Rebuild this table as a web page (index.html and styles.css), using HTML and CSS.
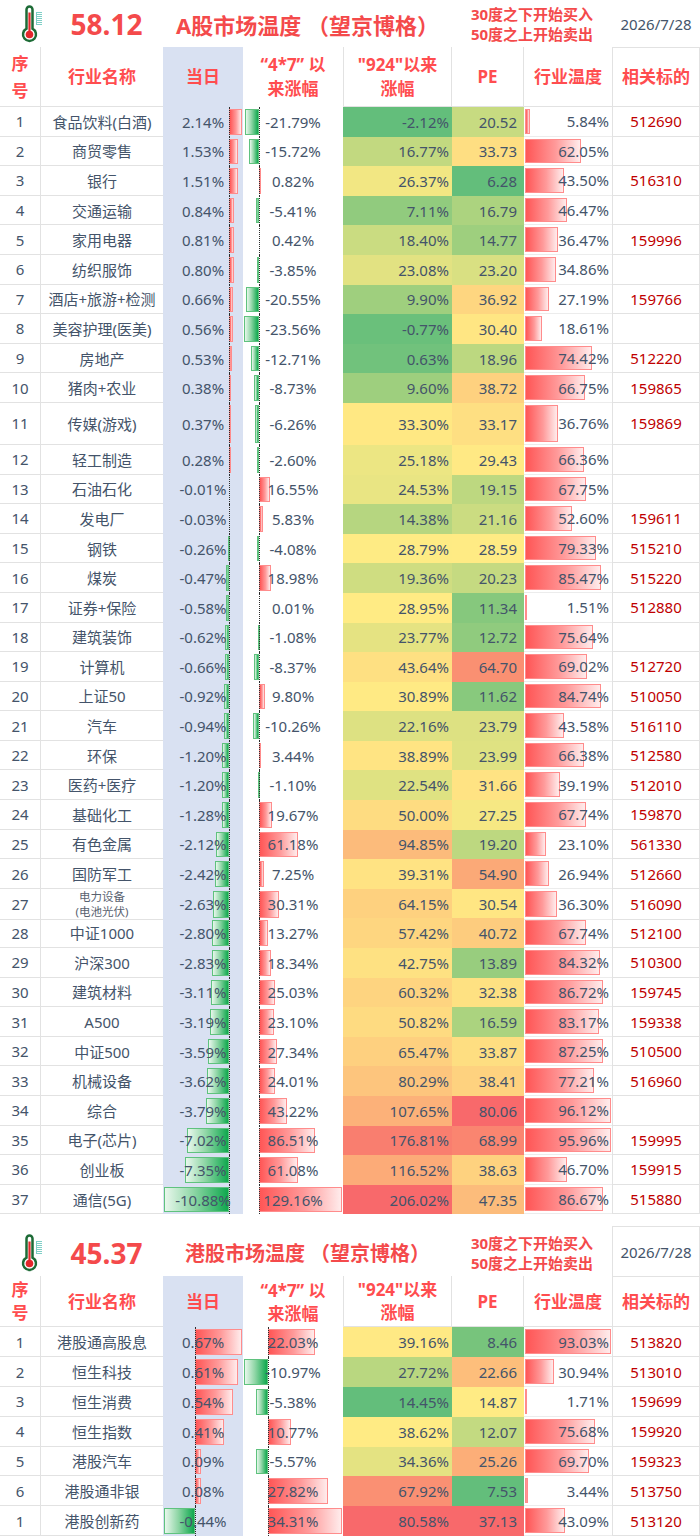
FILE: index.html
```html
<!DOCTYPE html>
<html lang="zh-CN">
<head>
<meta charset="utf-8">
<title>市场温度</title>
<link rel="stylesheet" href="styles.css">
</head>
<body>
<main class="sheet">

<section class="section a">
  <header class="title">
    <div class="t-icon">
      <svg width="22" height="38" viewBox="0 0 22 38" aria-hidden="true">
        <g stroke="#7fcfc6" stroke-width="1">
          <line x1="15.5" y1="7" x2="15.5" y2="20"/>
          <line x1="15" y1="7.5" x2="21" y2="7.5"/><line x1="15" y1="9.5" x2="21" y2="9.5"/><line x1="15" y1="11.5" x2="21" y2="11.5"/><line x1="15" y1="13.5" x2="21" y2="13.5"/><line x1="15" y1="15.5" x2="21" y2="15.5"/><line x1="15" y1="17.5" x2="21" y2="17.5"/><line x1="15" y1="19.5" x2="21" y2="19.5"/>
        </g>
        <path d="M5.5,23.7 V4.5 A3,3 0 0 1 11.5,4.5 V23.7 A6.5,6.5 0 1 1 5.5,23.7 Z" fill="#fff" stroke="#1d6b36" stroke-width="2.5"/>
        <line x1="8.5" y1="7.5" x2="8.5" y2="29" stroke="#e3262b" stroke-width="2.2"/>
        <circle cx="8.5" cy="29.5" r="3.8" fill="#e3262b"/>
      </svg>
    </div>
    <div class="t-num">58.12</div>
    <div class="t-name">A股市场温度 （望京博格）</div>
    <div class="t-note">30度之下开始买入<br>50度之上开始卖出</div>
    <div class="t-date">2026/7/28</div>
  </header>

  <div class="row head">
    <div class="c idx"><span class="v">序<br>号</span></div>
    <div class="c name"><span class="v">行业名称</span></div>
    <div class="c day"><span class="v">当日</span></div>
    <div class="c since"><span class="v">“4*7” 以<br>来涨幅</span></div>
    <div class="c g924"><span class="v">"924"以来<br>涨幅</span></div>
    <div class="c pe"><span class="v">PE</span></div>
    <div class="c temp"><span class="v">行业温度</span></div>
    <div class="c code"><span class="v">相关标的</span></div>
  </div>

  <div class="body">
    <div class="row"><div class="c idx"><span class="v">1</span></div><div class="c name"><span class="v">食品饮料(白酒)</span></div><div class="c day"><span class="v">2.14%</span></div><div class="c since"><span class="v">-21.79%</span></div><div class="c g924"><span class="v">-2.12%</span></div><div class="c pe"><span class="v">20.52</span></div><div class="c temp"><span class="v">5.84%</span></div><div class="c code"><span class="v">512690</span></div></div>
    <div class="row"><div class="c idx"><span class="v">2</span></div><div class="c name"><span class="v">商贸零售</span></div><div class="c day"><span class="v">1.53%</span></div><div class="c since"><span class="v">-15.72%</span></div><div class="c g924"><span class="v">16.77%</span></div><div class="c pe"><span class="v">33.73</span></div><div class="c temp"><span class="v">62.05%</span></div><div class="c code"><span class="v"></span></div></div>
    <div class="row"><div class="c idx"><span class="v">3</span></div><div class="c name"><span class="v">银行</span></div><div class="c day"><span class="v">1.51%</span></div><div class="c since"><span class="v">0.82%</span></div><div class="c g924"><span class="v">26.37%</span></div><div class="c pe"><span class="v">6.28</span></div><div class="c temp"><span class="v">43.50%</span></div><div class="c code"><span class="v">516310</span></div></div>
    <div class="row"><div class="c idx"><span class="v">4</span></div><div class="c name"><span class="v">交通运输</span></div><div class="c day"><span class="v">0.84%</span></div><div class="c since"><span class="v">-5.41%</span></div><div class="c g924"><span class="v">7.11%</span></div><div class="c pe"><span class="v">16.79</span></div><div class="c temp"><span class="v">46.47%</span></div><div class="c code"><span class="v"></span></div></div>
    <div class="row"><div class="c idx"><span class="v">5</span></div><div class="c name"><span class="v">家用电器</span></div><div class="c day"><span class="v">0.81%</span></div><div class="c since"><span class="v">0.42%</span></div><div class="c g924"><span class="v">18.40%</span></div><div class="c pe"><span class="v">14.77</span></div><div class="c temp"><span class="v">36.47%</span></div><div class="c code"><span class="v">159996</span></div></div>
    <div class="row"><div class="c idx"><span class="v">6</span></div><div class="c name"><span class="v">纺织服饰</span></div><div class="c day"><span class="v">0.80%</span></div><div class="c since"><span class="v">-3.85%</span></div><div class="c g924"><span class="v">23.08%</span></div><div class="c pe"><span class="v">23.20</span></div><div class="c temp"><span class="v">34.86%</span></div><div class="c code"><span class="v"></span></div></div>
    <div class="row"><div class="c idx"><span class="v">7</span></div><div class="c name"><span class="v">酒店+旅游+检测</span></div><div class="c day"><span class="v">0.66%</span></div><div class="c since"><span class="v">-20.55%</span></div><div class="c g924"><span class="v">9.90%</span></div><div class="c pe"><span class="v">36.92</span></div><div class="c temp"><span class="v">27.19%</span></div><div class="c code"><span class="v">159766</span></div></div>
    <div class="row"><div class="c idx"><span class="v">8</span></div><div class="c name"><span class="v">美容护理(医美)</span></div><div class="c day"><span class="v">0.56%</span></div><div class="c since"><span class="v">-23.56%</span></div><div class="c g924"><span class="v">-0.77%</span></div><div class="c pe"><span class="v">30.40</span></div><div class="c temp"><span class="v">18.61%</span></div><div class="c code"><span class="v"></span></div></div>
    <div class="row"><div class="c idx"><span class="v">9</span></div><div class="c name"><span class="v">房地产</span></div><div class="c day"><span class="v">0.53%</span></div><div class="c since"><span class="v">-12.71%</span></div><div class="c g924"><span class="v">0.63%</span></div><div class="c pe"><span class="v">18.96</span></div><div class="c temp"><span class="v">74.42%</span></div><div class="c code"><span class="v">512220</span></div></div>
    <div class="row"><div class="c idx"><span class="v">10</span></div><div class="c name"><span class="v">猪肉+农业</span></div><div class="c day"><span class="v">0.38%</span></div><div class="c since"><span class="v">-8.73%</span></div><div class="c g924"><span class="v">9.60%</span></div><div class="c pe"><span class="v">38.72</span></div><div class="c temp"><span class="v">66.75%</span></div><div class="c code"><span class="v">159865</span></div></div>
    <div class="row tall"><div class="c idx"><span class="v">11</span></div><div class="c name"><span class="v">传媒(游戏)</span></div><div class="c day"><span class="v">0.37%</span></div><div class="c since"><span class="v">-6.26%</span></div><div class="c g924"><span class="v">33.30%</span></div><div class="c pe"><span class="v">33.17</span></div><div class="c temp"><span class="v">36.76%</span></div><div class="c code"><span class="v">159869</span></div></div>
    <div class="row"><div class="c idx"><span class="v">12</span></div><div class="c name"><span class="v">轻工制造</span></div><div class="c day"><span class="v">0.28%</span></div><div class="c since"><span class="v">-2.60%</span></div><div class="c g924"><span class="v">25.18%</span></div><div class="c pe"><span class="v">29.43</span></div><div class="c temp"><span class="v">66.36%</span></div><div class="c code"><span class="v"></span></div></div>
    <div class="row"><div class="c idx"><span class="v">13</span></div><div class="c name"><span class="v">石油石化</span></div><div class="c day"><span class="v">-0.01%</span></div><div class="c since"><span class="v">16.55%</span></div><div class="c g924"><span class="v">24.53%</span></div><div class="c pe"><span class="v">19.15</span></div><div class="c temp"><span class="v">67.75%</span></div><div class="c code"><span class="v"></span></div></div>
    <div class="row"><div class="c idx"><span class="v">14</span></div><div class="c name"><span class="v">发电厂</span></div><div class="c day"><span class="v">-0.03%</span></div><div class="c since"><span class="v">5.83%</span></div><div class="c g924"><span class="v">14.38%</span></div><div class="c pe"><span class="v">21.16</span></div><div class="c temp"><span class="v">52.60%</span></div><div class="c code"><span class="v">159611</span></div></div>
    <div class="row"><div class="c idx"><span class="v">15</span></div><div class="c name"><span class="v">钢铁</span></div><div class="c day"><span class="v">-0.26%</span></div><div class="c since"><span class="v">-4.08%</span></div><div class="c g924"><span class="v">28.79%</span></div><div class="c pe"><span class="v">28.59</span></div><div class="c temp"><span class="v">79.33%</span></div><div class="c code"><span class="v">515210</span></div></div>
    <div class="row"><div class="c idx"><span class="v">16</span></div><div class="c name"><span class="v">煤炭</span></div><div class="c day"><span class="v">-0.47%</span></div><div class="c since"><span class="v">18.98%</span></div><div class="c g924"><span class="v">19.36%</span></div><div class="c pe"><span class="v">20.23</span></div><div class="c temp"><span class="v">85.47%</span></div><div class="c code"><span class="v">515220</span></div></div>
    <div class="row"><div class="c idx"><span class="v">17</span></div><div class="c name"><span class="v">证券+保险</span></div><div class="c day"><span class="v">-0.58%</span></div><div class="c since"><span class="v">0.01%</span></div><div class="c g924"><span class="v">28.95%</span></div><div class="c pe"><span class="v">11.34</span></div><div class="c temp"><span class="v">1.51%</span></div><div class="c code"><span class="v">512880</span></div></div>
    <div class="row"><div class="c idx"><span class="v">18</span></div><div class="c name"><span class="v">建筑装饰</span></div><div class="c day"><span class="v">-0.62%</span></div><div class="c since"><span class="v">-1.08%</span></div><div class="c g924"><span class="v">23.77%</span></div><div class="c pe"><span class="v">12.72</span></div><div class="c temp"><span class="v">75.64%</span></div><div class="c code"><span class="v"></span></div></div>
    <div class="row"><div class="c idx"><span class="v">19</span></div><div class="c name"><span class="v">计算机</span></div><div class="c day"><span class="v">-0.66%</span></div><div class="c since"><span class="v">-8.37%</span></div><div class="c g924"><span class="v">43.64%</span></div><div class="c pe"><span class="v">64.70</span></div><div class="c temp"><span class="v">69.02%</span></div><div class="c code"><span class="v">512720</span></div></div>
    <div class="row"><div class="c idx"><span class="v">20</span></div><div class="c name"><span class="v">上证50</span></div><div class="c day"><span class="v">-0.92%</span></div><div class="c since"><span class="v">9.80%</span></div><div class="c g924"><span class="v">30.89%</span></div><div class="c pe"><span class="v">11.62</span></div><div class="c temp"><span class="v">84.74%</span></div><div class="c code"><span class="v">510050</span></div></div>
    <div class="row"><div class="c idx"><span class="v">21</span></div><div class="c name"><span class="v">汽车</span></div><div class="c day"><span class="v">-0.94%</span></div><div class="c since"><span class="v">-10.26%</span></div><div class="c g924"><span class="v">22.16%</span></div><div class="c pe"><span class="v">23.79</span></div><div class="c temp"><span class="v">43.58%</span></div><div class="c code"><span class="v">516110</span></div></div>
    <div class="row"><div class="c idx"><span class="v">22</span></div><div class="c name"><span class="v">环保</span></div><div class="c day"><span class="v">-1.20%</span></div><div class="c since"><span class="v">3.44%</span></div><div class="c g924"><span class="v">38.89%</span></div><div class="c pe"><span class="v">23.99</span></div><div class="c temp"><span class="v">66.38%</span></div><div class="c code"><span class="v">512580</span></div></div>
    <div class="row"><div class="c idx"><span class="v">23</span></div><div class="c name"><span class="v">医药+医疗</span></div><div class="c day"><span class="v">-1.20%</span></div><div class="c since"><span class="v">-1.10%</span></div><div class="c g924"><span class="v">22.54%</span></div><div class="c pe"><span class="v">31.66</span></div><div class="c temp"><span class="v">39.19%</span></div><div class="c code"><span class="v">512010</span></div></div>
    <div class="row"><div class="c idx"><span class="v">24</span></div><div class="c name"><span class="v">基础化工</span></div><div class="c day"><span class="v">-1.28%</span></div><div class="c since"><span class="v">19.67%</span></div><div class="c g924"><span class="v">50.00%</span></div><div class="c pe"><span class="v">27.25</span></div><div class="c temp"><span class="v">67.74%</span></div><div class="c code"><span class="v">159870</span></div></div>
    <div class="row"><div class="c idx"><span class="v">25</span></div><div class="c name"><span class="v">有色金属</span></div><div class="c day"><span class="v">-2.12%</span></div><div class="c since"><span class="v">61.18%</span></div><div class="c g924"><span class="v">94.85%</span></div><div class="c pe"><span class="v">19.20</span></div><div class="c temp"><span class="v">23.10%</span></div><div class="c code"><span class="v">561330</span></div></div>
    <div class="row"><div class="c idx"><span class="v">26</span></div><div class="c name"><span class="v">国防军工</span></div><div class="c day"><span class="v">-2.42%</span></div><div class="c since"><span class="v">7.25%</span></div><div class="c g924"><span class="v">39.31%</span></div><div class="c pe"><span class="v">54.90</span></div><div class="c temp"><span class="v">26.94%</span></div><div class="c code"><span class="v">512660</span></div></div>
    <div class="row"><div class="c idx"><span class="v">27</span></div><div class="c name small"><span class="v">电力设备<br>(电池光伏)</span></div><div class="c day"><span class="v">-2.63%</span></div><div class="c since"><span class="v">30.31%</span></div><div class="c g924"><span class="v">64.15%</span></div><div class="c pe"><span class="v">30.54</span></div><div class="c temp"><span class="v">36.30%</span></div><div class="c code"><span class="v">516090</span></div></div>
    <div class="row"><div class="c idx"><span class="v">28</span></div><div class="c name"><span class="v">中证1000</span></div><div class="c day"><span class="v">-2.80%</span></div><div class="c since"><span class="v">13.27%</span></div><div class="c g924"><span class="v">57.42%</span></div><div class="c pe"><span class="v">40.72</span></div><div class="c temp"><span class="v">67.74%</span></div><div class="c code"><span class="v">512100</span></div></div>
    <div class="row"><div class="c idx"><span class="v">29</span></div><div class="c name"><span class="v">沪深300</span></div><div class="c day"><span class="v">-2.83%</span></div><div class="c since"><span class="v">18.34%</span></div><div class="c g924"><span class="v">42.75%</span></div><div class="c pe"><span class="v">13.89</span></div><div class="c temp"><span class="v">84.32%</span></div><div class="c code"><span class="v">510300</span></div></div>
    <div class="row"><div class="c idx"><span class="v">30</span></div><div class="c name"><span class="v">建筑材料</span></div><div class="c day"><span class="v">-3.11%</span></div><div class="c since"><span class="v">25.03%</span></div><div class="c g924"><span class="v">60.32%</span></div><div class="c pe"><span class="v">32.38</span></div><div class="c temp"><span class="v">86.72%</span></div><div class="c code"><span class="v">159745</span></div></div>
    <div class="row"><div class="c idx"><span class="v">31</span></div><div class="c name"><span class="v">A500</span></div><div class="c day"><span class="v">-3.19%</span></div><div class="c since"><span class="v">23.10%</span></div><div class="c g924"><span class="v">50.82%</span></div><div class="c pe"><span class="v">16.59</span></div><div class="c temp"><span class="v">83.17%</span></div><div class="c code"><span class="v">159338</span></div></div>
    <div class="row"><div class="c idx"><span class="v">32</span></div><div class="c name"><span class="v">中证500</span></div><div class="c day"><span class="v">-3.59%</span></div><div class="c since"><span class="v">27.34%</span></div><div class="c g924"><span class="v">65.47%</span></div><div class="c pe"><span class="v">33.87</span></div><div class="c temp"><span class="v">87.25%</span></div><div class="c code"><span class="v">510500</span></div></div>
    <div class="row"><div class="c idx"><span class="v">33</span></div><div class="c name"><span class="v">机械设备</span></div><div class="c day"><span class="v">-3.62%</span></div><div class="c since"><span class="v">24.01%</span></div><div class="c g924"><span class="v">80.29%</span></div><div class="c pe"><span class="v">38.41</span></div><div class="c temp"><span class="v">77.21%</span></div><div class="c code"><span class="v">516960</span></div></div>
    <div class="row"><div class="c idx"><span class="v">34</span></div><div class="c name"><span class="v">综合</span></div><div class="c day"><span class="v">-3.79%</span></div><div class="c since"><span class="v">43.22%</span></div><div class="c g924"><span class="v">107.65%</span></div><div class="c pe"><span class="v">80.06</span></div><div class="c temp"><span class="v">96.12%</span></div><div class="c code"><span class="v"></span></div></div>
    <div class="row"><div class="c idx"><span class="v">35</span></div><div class="c name"><span class="v">电子(芯片)</span></div><div class="c day"><span class="v">-7.02%</span></div><div class="c since"><span class="v">86.51%</span></div><div class="c g924"><span class="v">176.81%</span></div><div class="c pe"><span class="v">68.99</span></div><div class="c temp"><span class="v">95.96%</span></div><div class="c code"><span class="v">159995</span></div></div>
    <div class="row"><div class="c idx"><span class="v">36</span></div><div class="c name"><span class="v">创业板</span></div><div class="c day"><span class="v">-7.35%</span></div><div class="c since"><span class="v">61.08%</span></div><div class="c g924"><span class="v">116.52%</span></div><div class="c pe"><span class="v">38.63</span></div><div class="c temp"><span class="v">46.70%</span></div><div class="c code"><span class="v">159915</span></div></div>
    <div class="row"><div class="c idx"><span class="v">37</span></div><div class="c name"><span class="v">通信(5G)</span></div><div class="c day"><span class="v">-10.88%</span></div><div class="c since"><span class="v">129.16%</span></div><div class="c g924"><span class="v">206.02%</span></div><div class="c pe"><span class="v">47.35</span></div><div class="c temp"><span class="v">86.67%</span></div><div class="c code"><span class="v">515880</span></div></div>
  </div>
</section>

<section class="section hk">
  <header class="title">
    <div class="t-icon">
      <svg width="22" height="38" viewBox="0 0 22 38" aria-hidden="true">
        <g stroke="#7fcfc6" stroke-width="1">
          <line x1="15.5" y1="7" x2="15.5" y2="20"/>
          <line x1="15" y1="7.5" x2="21" y2="7.5"/><line x1="15" y1="9.5" x2="21" y2="9.5"/><line x1="15" y1="11.5" x2="21" y2="11.5"/><line x1="15" y1="13.5" x2="21" y2="13.5"/><line x1="15" y1="15.5" x2="21" y2="15.5"/><line x1="15" y1="17.5" x2="21" y2="17.5"/><line x1="15" y1="19.5" x2="21" y2="19.5"/>
        </g>
        <path d="M5.5,23.7 V4.5 A3,3 0 0 1 11.5,4.5 V23.7 A6.5,6.5 0 1 1 5.5,23.7 Z" fill="#fff" stroke="#1d6b36" stroke-width="2.5"/>
        <line x1="8.5" y1="7.5" x2="8.5" y2="29" stroke="#e3262b" stroke-width="2.2"/>
        <circle cx="8.5" cy="29.5" r="3.8" fill="#e3262b"/>
      </svg>
    </div>
    <div class="t-num">45.37</div>
    <div class="t-name">港股市场温度 （望京博格）</div>
    <div class="t-note">30度之下开始买入<br>50度之上开始卖出</div>
    <div class="t-date">2026/7/28</div>
  </header>

  <div class="row head">
    <div class="c idx"><span class="v">序<br>号</span></div>
    <div class="c name"><span class="v">行业名称</span></div>
    <div class="c day"><span class="v">当日</span></div>
    <div class="c since"><span class="v">“4*7” 以<br>来涨幅</span></div>
    <div class="c g924"><span class="v">"924"以来<br>涨幅</span></div>
    <div class="c pe"><span class="v">PE</span></div>
    <div class="c temp"><span class="v">行业温度</span></div>
    <div class="c code"><span class="v">相关标的</span></div>
  </div>

  <div class="body">
    <div class="row"><div class="c idx"><span class="v">1</span></div><div class="c name"><span class="v">港股通高股息</span></div><div class="c day"><span class="v">0.67%</span></div><div class="c since"><span class="v">22.03%</span></div><div class="c g924"><span class="v">39.16%</span></div><div class="c pe"><span class="v">8.46</span></div><div class="c temp"><span class="v">93.03%</span></div><div class="c code"><span class="v">513820</span></div></div>
    <div class="row"><div class="c idx"><span class="v">2</span></div><div class="c name"><span class="v">恒生科技</span></div><div class="c day"><span class="v">0.61%</span></div><div class="c since"><span class="v">-10.97%</span></div><div class="c g924"><span class="v">27.72%</span></div><div class="c pe"><span class="v">22.66</span></div><div class="c temp"><span class="v">30.94%</span></div><div class="c code"><span class="v">513010</span></div></div>
    <div class="row"><div class="c idx"><span class="v">3</span></div><div class="c name"><span class="v">恒生消费</span></div><div class="c day"><span class="v">0.54%</span></div><div class="c since"><span class="v">-5.38%</span></div><div class="c g924"><span class="v">14.45%</span></div><div class="c pe"><span class="v">14.87</span></div><div class="c temp"><span class="v">1.71%</span></div><div class="c code"><span class="v">159699</span></div></div>
    <div class="row"><div class="c idx"><span class="v">4</span></div><div class="c name"><span class="v">恒生指数</span></div><div class="c day"><span class="v">0.41%</span></div><div class="c since"><span class="v">10.77%</span></div><div class="c g924"><span class="v">38.62%</span></div><div class="c pe"><span class="v">12.07</span></div><div class="c temp"><span class="v">75.68%</span></div><div class="c code"><span class="v">159920</span></div></div>
    <div class="row"><div class="c idx"><span class="v">5</span></div><div class="c name"><span class="v">港股汽车</span></div><div class="c day"><span class="v">0.09%</span></div><div class="c since"><span class="v">-5.57%</span></div><div class="c g924"><span class="v">34.36%</span></div><div class="c pe"><span class="v">25.26</span></div><div class="c temp"><span class="v">69.70%</span></div><div class="c code"><span class="v">159323</span></div></div>
    <div class="row"><div class="c idx"><span class="v">6</span></div><div class="c name"><span class="v">港股通非银</span></div><div class="c day"><span class="v">0.08%</span></div><div class="c since"><span class="v">27.82%</span></div><div class="c g924"><span class="v">67.92%</span></div><div class="c pe"><span class="v">7.53</span></div><div class="c temp"><span class="v">3.44%</span></div><div class="c code"><span class="v">513750</span></div></div>
    <div class="row"><div class="c idx"><span class="v">1</span></div><div class="c name"><span class="v">港股创新药</span></div><div class="c day"><span class="v">-0.44%</span></div><div class="c since"><span class="v">34.31%</span></div><div class="c g924"><span class="v">80.58%</span></div><div class="c pe"><span class="v">37.13</span></div><div class="c temp"><span class="v">43.09%</span></div><div class="c code"><span class="v">513120</span></div></div>
  </div>
</section>

</main>
<script src="script.js"></script>
</body>
</html>
```

FILE: styles.css
```css
* { box-sizing: border-box; }

body {
  margin: 0;
  background: #ffffff;
  font-family: "Noto Sans", "Noto Sans CJK SC", sans-serif;
  color: #44546a;
}

.sheet { width: 700px; }

/* ---------- title band ---------- */
.title {
  display: flex;
  align-items: center;
  height: 47px;
}
.hk .title {
  height: 62px;
  padding-top: 15px;
}
.t-icon {
  width: 50px;
  padding-left: 21px;
  display: flex;
  align-items: center;
}
.t-num {
  width: 113px;
  text-align: center;
  font-size: 28px;
  font-weight: 700;
  color: #f44a4b;
  line-height: 1;
}
.t-name {
  width: 289px;
  text-align: center;
  font-size: 22px;
  font-weight: 700;
  color: #f44a4b;
  white-space: nowrap;
  font-family: "Noto Sans", "Noto Sans CJK SC", sans-serif;
}
.hk .t-name { font-size: 20px; }
.t-note {
  width: 160px;
  text-align: center;
  font-size: 15px;
  font-weight: 700;
  line-height: 20px;
  color: #f44a4b;
}
.t-date {
  width: 88px;
  text-align: center;
  font-size: 15px;
  color: #44546a;
}
.hk .t-date {
  align-self: stretch;
  display: flex;
  align-items: center;
  justify-content: center;
  border-left: 1px solid #e2e2e2;
  border-top: 1px solid #e2e2e2;
  border-right: 1px solid #e2e2e2;
  margin-top: -3px;
}

/* ---------- grid rows ---------- */
.row {
  display: grid;
  grid-template-columns: 41px 122px 80px 100px 109px 72px 88px 88px;
  height: 29.6px;
}
.row.tall { height: 42px; }
.a .head { height: 60px; }
.hk .head { height: 51px; }
.hk .body .row { height: 29.8px; }

.c {
  position: relative;
  display: flex;
  align-items: center;
  justify-content: center;
  min-width: 0;
  font-size: 15px;
  white-space: nowrap;
}
.c .v {
  position: relative;
  z-index: 2;
}

/* column looks */
.idx {
  border-right: 1px solid #e2e2e2;
  border-bottom: 1px solid #e2e2e2;
}
.name { border-bottom: 1px solid #e2e2e2; }
.day { background: #d9e1f2; }
.since { background: #ffffff; }
.g924 { justify-content: flex-end; padding-right: 3px; }
.pe { justify-content: flex-end; padding-right: 7px; }
.temp {
  justify-content: flex-end;
  padding-right: 3px;
  border-bottom: 1px solid #ececec;
}
.code {
  color: #c00000;
  border-left: 1px solid #e2e2e2;
  border-right: 1px solid #e2e2e2;
  border-bottom: 1px solid #e2e2e2;
}

.name.small .v {
  font-size: 11.5px;
  line-height: 15px;
  text-align: center;
  color: #59626f;
  white-space: normal;
}

/* header row */
.head .c {
  font-size: 17px;
  font-weight: 700;
  color: #ff4d4f;
  line-height: 24px;
  text-align: center;
  padding: 0;
  justify-content: center;
}
.head .c .v { text-align: center; }
.a .head .idx { line-height: 27px; }
.hk .head .c { line-height: 23px; }
.head .g924 {
  border-left: 1px solid #e2e2e2;
  border-right: 1px solid #e2e2e2;
  border-bottom: 1px solid #e2e2e2;
}
.head .pe {
  border-right: 1px solid #e2e2e2;
  border-bottom: 1px solid #e2e2e2;
}
.head .temp {
  border-bottom: 1px solid #e2e2e2;
}
.head .code {
  color: #ff4d4f;
  border-top: 1px solid #e2e2e2;
}

/* data bars (drawn by script.js, overlaying the cell fill) */
.db {
  position: absolute;
  top: 2px;
  bottom: 2px;
  z-index: 0;
}
.db.pos {
  background: linear-gradient(90deg, #ff5656 0%, #ff9a9a 55%, #ffecec 100%);
  border: 1px solid #ff8c8c;
}
.db.neg {
  background: linear-gradient(90deg, #e8f7ec 0%, #8fd6a6 45%, #0fa84e 100%);
  border: 1px solid #5fc27e;
}
.ax {
  position: absolute;
  top: 0;
  bottom: 0;
  width: 0;
  border-left: 1px dotted #2b2b2b;
  z-index: 1;
}
```

FILE: script.js
```js
(function () {
  function val(el) {
    return parseFloat(el.textContent.replace('%', ''));
  }
  function mix(a, b, t) {
    return a.map(function (x, i) { return Math.round(x + (b[i] - x) * t); });
  }
  var LO = [99, 190, 123], MID = [255, 235, 132], HI = [248, 105, 107];

  document.querySelectorAll('.section').forEach(function (sec) {
    // data bars: [column class, usable width in px]
    [['day', 78], ['since', 98], ['temp', 86]].forEach(function (spec) {
      var cells = Array.prototype.slice.call(sec.querySelectorAll('.body .' + spec[0]));
      var vals = cells.map(val);
      var mn = Math.min.apply(null, [0].concat(vals));
      var mx = Math.max.apply(null, [0].concat(vals));
      var range = mx - mn || 1;
      var W = spec[1];
      var axis = 1 + W * (-mn) / range;
      cells.forEach(function (c, i) {
        var v = vals[i];
        if (isNaN(v)) return;
        var w = W * Math.abs(v) / range;
        if (w >= 0.5) {
          var b = document.createElement('span');
          b.className = 'db ' + (v < 0 ? 'neg' : 'pos');
          b.style.left = (v < 0 ? axis - w : axis) + 'px';
          b.style.width = Math.max(w, 2) + 'px';
          c.insertBefore(b, c.firstChild);
        }
        if (mn < 0) {
          var a = document.createElement('span');
          a.className = 'ax';
          a.style.left = Math.round(axis) + 'px';
          c.appendChild(a);
        }
      });
    });

    // three-colour scales (green - yellow at 50th percentile - red)
    ['g924', 'pe'].forEach(function (cls) {
      var cells = Array.prototype.slice.call(sec.querySelectorAll('.body .' + cls));
      var vals = cells.map(val);
      var s = vals.slice().sort(function (a, b) { return a - b; });
      var mn = s[0], mx = s[s.length - 1];
      var p = (s.length - 1) * 0.5, lo = Math.floor(p), hi = Math.ceil(p);
      var mid = s[lo] + (s[hi] - s[lo]) * (p - lo);
      cells.forEach(function (c, i) {
        var v = vals[i], col;
        if (v <= mid) col = mix(LO, MID, mid === mn ? 1 : (v - mn) / (mid - mn));
        else col = mix(MID, HI, (v - mid) / (mx - mid));
        c.style.backgroundColor = 'rgb(' + col.join(',') + ')';
      });
    });
  });
})();
```
